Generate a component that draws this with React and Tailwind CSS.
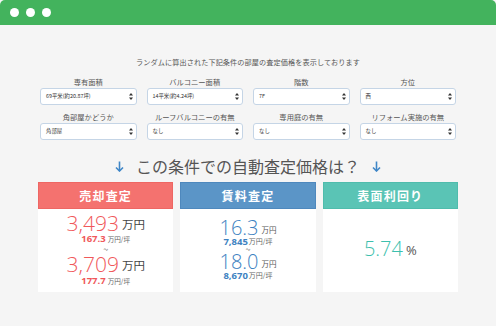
import React from "react";

const JP = { fontFamily: '"Noto Sans CJK JP", "Noto Sans", sans-serif' };
const NUM = { fontFamily: '"Open Sans", "Noto Sans CJK JP", sans-serif' };

function UpDown() {
  return (
    <svg width="4" height="7" viewBox="0 0 4 7" className="shrink-0">
      <path d="M2 0 L4 2.6 L0 2.6 Z" fill="#333" />
      <path d="M2 7 L4 4.4 L0 4.4 Z" fill="#333" />
    </svg>
  );
}

function Field({ label, value }) {
  return (
    <div className="flex flex-col">
      <div className="h-[11px] leading-[11px] text-center text-[7.3px] text-[#555]">{label}</div>
      <div className="h-[17px] bg-white border border-[#c5d5e6] rounded-[3px] flex items-center justify-between pl-[5px] pr-[3px]">
        <span className="text-[5.4px] text-[#333] leading-none">{value}</span>
        <UpDown />
      </div>
    </div>
  );
}

function Arrow() {
  return (
    <svg width="9" height="11" viewBox="0 0 9 11" className="shrink-0">
      <path d="M4.5 0.5 V10" stroke="#3f86c7" strokeWidth="1.6" fill="none" />
      <path d="M1 6.5 L4.5 10 L8 6.5" stroke="#3f86c7" strokeWidth="1.6" fill="none" strokeLinejoin="miter" />
    </svg>
  );
}

function Header({ bg, border, children }) {
  return (
    <div
      className={`h-[27px] flex items-center justify-center text-white font-bold text-[12px] tracking-[1.2px] border ${bg} ${border}`}
    >
      {children}
    </div>
  );
}

function Row({ h, children }) {
  return <div className={`flex items-center overflow-visible ${h}`}>{children}</div>;
}

export default function App() {
  const fields1 = [
    ["専有面積", "69平米(約20.87坪)"],
    ["バルコニー面積", "14平米(約4.24坪)"],
    ["階数", "7F"],
    ["方位", "西"],
  ];
  const fields2 = [
    ["角部屋かどうか", "角部屋"],
    ["ルーフバルコニーの有無", "なし"],
    ["専用庭の有無", "なし"],
    ["リフォーム実施の有無", "なし"],
  ];
  return (
    <div className="w-[496px] h-[326px] bg-[#f5f5f5] overflow-hidden" style={JP}>
      <div className="h-[25px] bg-[#43b35d] rounded-t-[5px] flex items-center gap-[7px] pl-[10px]">
        <div className="w-[9px] h-[9px] rounded-full bg-white" />
        <div className="w-[9px] h-[9px] rounded-full bg-white" />
        <div className="w-[9px] h-[9px] rounded-full bg-white" />
      </div>

      <div className="pt-[32px] h-[11px] box-content leading-[11px] text-center text-[7.15px] text-[#555] tracking-[0.1px]">
        ランダムに算出された下記条件の部屋の査定価格を表示しております
      </div>

      <div className="mt-[9px] px-[40px] grid grid-cols-4 gap-x-[10px] gap-y-[7px]">
        {fields1.map(([l, v]) => (
          <Field key={l} label={l} value={v} />
        ))}
        {fields2.map(([l, v]) => (
          <Field key={l} label={l} value={v} />
        ))}
      </div>

      <div className="mt-[15px] h-[22px] flex items-center justify-center gap-[12px]">
        <Arrow />
        <span className="text-[16px] leading-[22px] text-[#555]">この条件での自動査定価格は？</span>
        <Arrow />
      </div>

      <div className="mt-[5px] px-[38px] grid grid-cols-3 gap-x-[7px]">
        <div className="flex flex-col">
          <Header bg="bg-[#f4726f]" border="border-[#ee6663]">売却査定</Header>
          <div className="h-[83px] bg-white flex flex-col items-center pt-[4px]">
            <Row h="h-[20px]">
              <span className="text-[21px] font-light text-[#f0585a] leading-none" style={NUM}>3,493</span>
              <span className="ml-[3px] text-[11.5px] text-[#444] leading-none mt-[3px]">万円</span>
            </Row>
            <Row h="h-[12px]">
              <span className="text-[9.5px] font-bold text-[#f0585a] leading-none" style={NUM}>167.3</span>
              <span className="ml-[2px] text-[6.6px] text-[#666] leading-none">万円/坪</span>
            </Row>
            <Row h="h-[9px]">
              <span className="text-[9px] text-[#666] leading-none">~</span>
            </Row>
            <Row h="h-[20px]">
              <span className="text-[21px] font-light text-[#f0585a] leading-none" style={NUM}>3,709</span>
              <span className="ml-[3px] text-[11.5px] text-[#444] leading-none mt-[3px]">万円</span>
            </Row>
            <Row h="h-[14px]">
              <span className="text-[9.5px] font-bold text-[#f0585a] leading-none" style={NUM}>177.7</span>
              <span className="ml-[2px] text-[6.6px] text-[#666] leading-none">万円/坪</span>
            </Row>
          </div>
        </div>

        <div className="flex flex-col">
          <Header bg="bg-[#5b95c7]" border="border-[#4e88bd]">賃料査定</Header>
          <div className="h-[83px] bg-white flex flex-col items-center pt-[10px]">
            <Row h="h-[18px]">
              <span className="text-[20px] font-light text-[#3d82c1] leading-none" style={NUM}>16.3</span>
              <span className="ml-[3px] text-[7.5px] text-[#555] leading-none mt-[4px]">万円</span>
            </Row>
            <Row h="h-[9px]">
              <span className="text-[9.5px] font-bold text-[#3d82c1] leading-none" style={NUM}>7,845</span>
              <span className="ml-[1px] text-[7px] text-[#666] leading-none">万円/坪</span>
            </Row>
            <Row h="h-[7px]">
              <span className="text-[9px] text-[#666] leading-none">~</span>
            </Row>
            <Row h="h-[18px]">
              <span className="text-[20px] font-light text-[#3d82c1] leading-none" style={NUM}>18.0</span>
              <span className="ml-[3px] text-[7.5px] text-[#555] leading-none mt-[4px]">万円</span>
            </Row>
            <Row h="h-[9px]">
              <span className="text-[9.5px] font-bold text-[#3d82c1] leading-none" style={NUM}>8,670</span>
              <span className="ml-[1px] text-[7px] text-[#666] leading-none">万円/坪</span>
            </Row>
          </div>
        </div>

        <div className="flex flex-col">
          <Header bg="bg-[#5ac4b5]" border="border-[#4fbcac]">表面利回り</Header>
          <div className="h-[83px] bg-white flex items-center justify-center pb-[3px]">
            <span className="text-[20px] font-light text-[#3dbfae] leading-none" style={NUM}>5.74</span>
            <span className="ml-[3px] text-[13px] text-[#555] leading-none mt-[3px]" style={NUM}>%</span>
          </div>
        </div>
      </div>
    </div>
  );
}
